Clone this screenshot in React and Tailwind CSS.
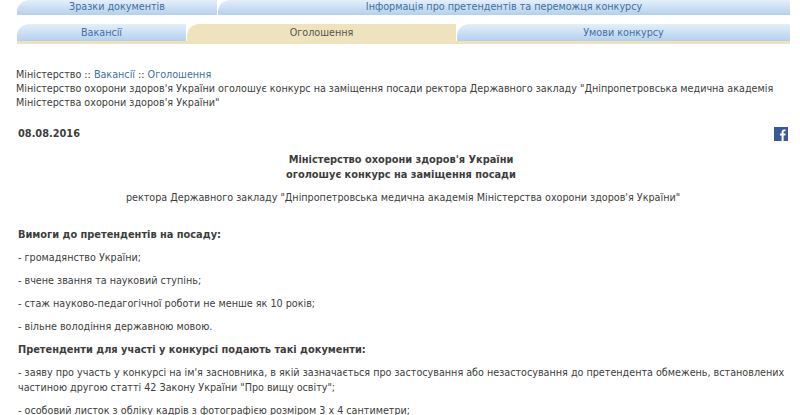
const blueTab = "rounded-tl-[12px] bg-gradient-to-b from-[#e4effa] to-[#b4d0ee] text-[#3f6fa3] text-center";
const heading = "text-[10.9px] font-bold";

function Tab({ className, children }) {
  return <div className={className}>{children}</div>;
}

export default function App() {
  return (
    <div className="w-[800px] h-[415px] overflow-hidden bg-white text-[10.7px] leading-[15px] text-[#3d3d3d] font-['DejaVu_Sans',sans-serif] font-stretch-condensed">
      <div className="ml-[17px] w-[773px] flex gap-px h-[15px]">
        <Tab className={`w-[200px] leading-[13px] ${blueTab}`}>Зразки документів</Tab>
        <Tab className={`flex-1 leading-[13px] ${blueTab}`}>Інформація про претендентів та переможця конкурсу</Tab>
      </div>
      <div className="ml-[17px] mt-[9px] w-[773px] border-b-[3px] border-[#efe3bd]">
        <div className="flex gap-px h-[17px]">
          <Tab className={`w-[169px] leading-[17px] ${blueTab}`}>Вакансії</Tab>
          <Tab className="w-[269px] leading-[17px] text-center rounded-tl-[12px] bg-[#efe3bd] text-[#555]">Оголошення</Tab>
          <Tab className={`flex-1 leading-[17px] ${blueTab}`}>Умови конкурсу</Tab>
        </div>
      </div>

      <div className="ml-[16px] w-[770px] mt-[24px] leading-[14px]">
        <div>
          Міністерство :: <span className="text-[#3f6fa3]">Вакансії</span> :: <span className="text-[#3f6fa3]">Оголошення</span>
        </div>
        <div className="w-[765px]">
          Міністерство охорони здоров'я України оголошує конкурс на заміщення посади ректора Державного закладу "Дніпропетровська медична академія Міністерства охорони здоров'я України"
        </div>
      </div>

      <div className="ml-[18px] w-[770px] mt-[16px] flex items-center justify-between h-[15px]">
        <b className={heading}>08.08.2016</b>
        <svg width="14" height="14" viewBox="0 0 14 14">
          <rect width="14" height="14" fill="#3b5998" />
          <path d="M9.6 14V8.6h1.7l.3-2H9.6V5.3c0-.6.2-1 1-1h1V2.5c-.2 0-.8-.1-1.5-.1-1.5 0-2.500.9-2.500 2.600v1.600H6v2h1.600V14z" fill="#fff" />
        </svg>
      </div>

      <div className="ml-[18px] w-[770px] mt-[11px] text-center">
        <b className={`${heading} block pr-[4px]`}>
          Міністерство охорони здоров'я України
          <br />
          оголошує конкурс на заміщення посади
        </b>
        <p className="mt-[8px]">ректора Державного закладу "Дніпропетровська медична академія Міністерства охорони здоров'я України"</p>
      </div>

      <div className="ml-[18px] w-[772px] mt-[22px] flex flex-col gap-[8px]">
        <b className={heading}>Вимоги до претендентів на посаду:</b>
        <p>- громадянство України;</p>
        <p>- вчене звання та науковий ступінь;</p>
        <p>- стаж науково-педагогічної роботи не менше як 10 років;</p>
        <p>- вільне володіння державною мовою.</p>
        <b className={heading}>Претенденти для участі у конкурсі подають такі документи:</b>
        <p>- заяву про участь у конкурсі на ім'я засновника, в якій зазначається про застосування або незастосування до претендента обмежень, встановлених частиною другою статті 42 Закону України "Про вищу освіту";</p>
        <p>- особовий листок з обліку кадрів з фотографією розміром 3 х 4 сантиметри;</p>
      </div>
    </div>
  );
}
